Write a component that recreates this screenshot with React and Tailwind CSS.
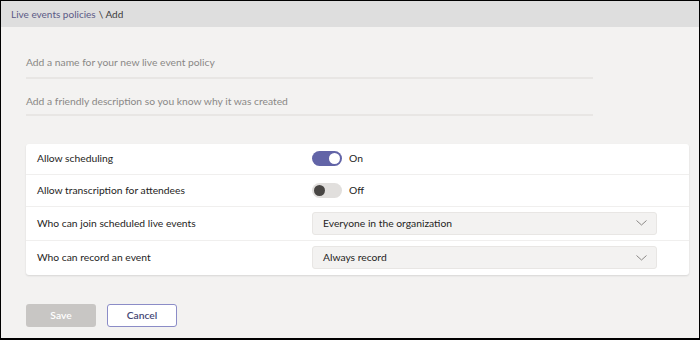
import React, { useState } from 'react';

function Toggle({ on, onClick }) {
    return (
        <button
            onClick={onClick}
            className={`relative w-[30px] h-[15px] rounded-full flex items-center px-[2px] ${on ? 'bg-[#6264a7] justify-end' : 'bg-[#e1dfdd] justify-start'}`}
        >
            <span className={`block w-[11px] h-[11px] rounded-full ${on ? 'bg-white' : 'bg-[#484644]'}`} />
        </button>
    );
}

function Chevron() {
    return (
        <svg width="11" height="6" viewBox="0 0 11 6" fill="none">
            <path d="M0.5 0.5 L5.5 5 L10.5 0.5" stroke="#8a8886" strokeWidth="1" />
        </svg>
    );
}

function Select({ value }) {
    return (
        <div className="w-[345px] h-[23px] flex items-center justify-between pl-[10px] pr-[9px] bg-[#f3f2f1] border border-[#e8e6e4] rounded-[3px] text-[#252423]">
            <span>{value}</span>
            <Chevron />
        </div>
    );
}

export default function App() {
    const [scheduling, setScheduling] = useState(true);
    const [transcription, setTranscription] = useState(false);

    const rows = [
        {
            label: 'Allow scheduling',
            control: (
                <div className="flex items-center gap-[7px]">
                    <Toggle on={scheduling} onClick={() => setScheduling(!scheduling)} />
                    <span>{scheduling ? 'On' : 'Off'}</span>
                </div>
            ),
            h: 'h-[30px]',
        },
        {
            label: 'Allow transcription for attendees',
            control: (
                <div className="flex items-center gap-[7px]">
                    <Toggle on={transcription} onClick={() => setTranscription(!transcription)} />
                    <span>{transcription ? 'On' : 'Off'}</span>
                </div>
            ),
            h: 'h-[32px]',
        },
        { label: 'Who can join scheduled live events', control: <Select value="Everyone in the organization" />, h: 'h-[34px]' },
        { label: 'Who can record an event', control: <Select value="Always record" />, h: 'h-[35px]' },
    ];

    return (
        <div className="w-[700px] h-[340px] border-t border-l border-r border-b-2 border-black bg-[#f3f2f1] flex flex-col text-[10.3px] text-[#252423] font-['Segoe_UI','Lato','Noto_Sans',sans-serif] overflow-hidden">
            <div className="h-[26px] shrink-0 bg-[#dedede] flex items-center pl-[10px] text-[10px]">
                <span className="text-[#5b5a86]">Live events policies</span>
                <span className="text-[#3b3a39] ml-[3px]">\ Add</span>
            </div>

            <div className="px-[25px] flex flex-col">
                <div className="w-[567px] mt-[28px] pb-[7px] border-b-2 border-[#e8e6e4] text-[#8a8886]">
                    Add a name for your new live event policy
                </div>
                <div className="w-[567px] mt-[15px] pb-[4px] border-b-2 border-[#e8e6e4] text-[#8a8886]">
                    Add a friendly description so you know why it was created
                </div>

                <div className="w-[663px] mt-[28px] bg-white rounded-[3px] shadow-[0_1px_2px_rgba(0,0,0,0.12)] flex flex-col">
                    {rows.map((r, i) => (
                        <div
                            key={i}
                            className={`${r.h} flex items-center ${i > 0 ? 'border-t border-[#f0efee]' : ''}`}
                        >
                            <div className="w-[286px] pl-[11px]">{r.label}</div>
                            {r.control}
                        </div>
                    ))}
                </div>

                <div className="flex gap-[11px] mt-[29px]">
                    <button className="w-[70px] h-[23px] rounded-[3px] bg-[#c8c6c4] text-white font-semibold">Save</button>
                    <button className="w-[70px] h-[23px] rounded-[3px] bg-white border border-[#8b8cc7] text-[#464775] font-semibold">Cancel</button>
                </div>
            </div>
        </div>
    );
}
